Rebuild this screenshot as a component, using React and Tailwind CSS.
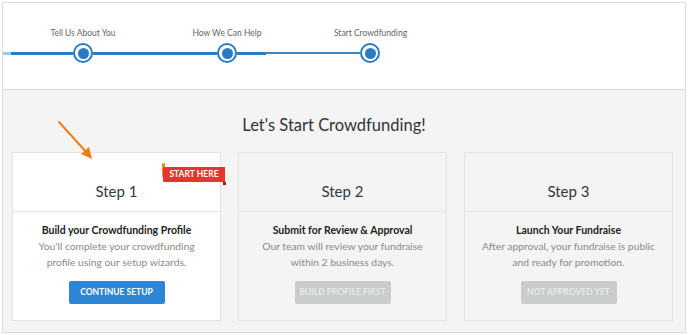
import React from "react";

const font = { fontFamily: "Lato, 'Open Sans', Arial, sans-serif" };

const steps = [
  {
    step: "Step 1",
    title: "Build your Crowdfunding Profile",
    lines: ["You'll complete your crowdfunding", "profile using our setup wizards."],
    button: "CONTINUE SETUP",
    active: true,
  },
  {
    step: "Step 2",
    title: "Submit for Review & Approval",
    lines: ["Our team will review your fundraise", "within 2 business days."],
    button: "BUILD PROFILE FIRST",
  },
  {
    step: "Step 3",
    title: "Launch Your Fundraise",
    lines: ["After approval, your fundraise is public", "and ready for promotion."],
    button: "NOT APPROVED YET",
  },
];

function Dot() {
  return (
    <div className="flex h-[20px] w-[20px] shrink-0 items-center justify-center rounded-full border-[2px] border-[#2a7bc4] bg-white">
      <div className="h-[11px] w-[11px] rounded-full bg-[#2a7bc4]" />
    </div>
  );
}

function Ribbon() {
  return (
    <div className="absolute left-[149px] top-[10px] h-[23px] w-[64px]">
      <div className="absolute left-0 top-0 h-[14px] w-[3px] rounded-t-[1px] bg-[#f0901e]" />
      <div className="absolute left-[1px] top-[4px] flex h-[15px] w-[62px] items-center justify-center rounded-l-[1px] bg-[#e2362f] text-[8.5px] font-bold text-white">
        START HERE
      </div>
      <div className="absolute right-0 top-[19px] h-[3px] w-[3px] bg-[#9b1f1a]" />
    </div>
  );
}

export default function App() {
  return (
    <div className="h-[335px] w-[688px] bg-white p-[2px]" style={font}>
      <div className="relative flex h-[331px] w-[684px] flex-col border border-[#dcdcdc]">
        <div className="h-[87px] border-b border-[#dadada] bg-white pt-[24px]">
          <div className="flex pl-[8px] text-[8.5px] leading-[12px] text-[#666]">
            <div className="w-[144px] text-center">Tell Us About You</div>
            <div className="w-[144px] text-center">How We Can Help</div>
            <div className="w-[143px] text-center">Start Crowdfunding</div>
          </div>
          <div className="mt-[4px] flex items-center">
            <div className="h-[3px] w-[8px] bg-[#a9c4dd]" />
            <div className="h-[3px] w-[62px] bg-[#2a7bc4]" />
            <Dot />
            <div className="h-[3px] w-[124px] bg-[#2a7bc4]" />
            <Dot />
            <div className="h-[3px] w-[29px] bg-[#2a7bc4]" />
            <div className="h-[2px] w-[94px] bg-[#3b86c9]" />
            <Dot />
          </div>
        </div>
        <div className="flex flex-1 flex-col bg-[#f4f4f4]">
          <h1 className="mt-[24px] pr-[20px] text-center text-[16.5px] leading-[22px] text-[#2f3438]">Let's Start Crowdfunding!</h1>
          <div className="mt-[16px] flex gap-[17px] pl-[9px]">
            {steps.map((s) => (
              <div
                key={s.step}
                className={`relative h-[169px] w-[209px] border border-[#e2e2e2] ${s.active ? "bg-white" : "bg-[#f4f4f4]"}`}
              >
                <div className="flex h-[59px] items-end justify-center border-b border-[#e4e4e4] pb-[10px]">
                  <span className="text-[15px] leading-[20px] text-[#2f3a44]">{s.step}</span>
                </div>
                <div className="flex flex-col items-center pt-[11px] text-center">
                  <div className="text-[10.5px] font-bold leading-[15px] text-[#222]">{s.title}</div>
                  <div className="text-[10.3px] leading-[16px] text-[#8a8a8a]">
                    {s.lines.map((l) => (
                      <div key={l}>{l}</div>
                    ))}
                  </div>
                  <div
                    className={`mt-[11px] flex h-[23px] w-[96px] items-center justify-center rounded-[2px] text-[8.5px] font-bold ${
                      s.active ? "bg-[#2d86d5] text-white" : "bg-[#c9cccd] text-[#e8eaea]"
                    }`}
                  >
                    {s.button}
                  </div>
                </div>
                {s.active && <Ribbon />}
              </div>
            ))}
          </div>
        </div>
        <svg className="absolute left-[50px] top-[114px]" width="46" height="50" viewBox="0 0 46 50">
          <line x1="6" y1="5" x2="35" y2="37" stroke="#ef7d1a" strokeWidth="2" strokeLinecap="round" />
          <polygon points="39,42 28,37 36,30" fill="#ef7d1a" />
        </svg>
      </div>
    </div>
  );
}
